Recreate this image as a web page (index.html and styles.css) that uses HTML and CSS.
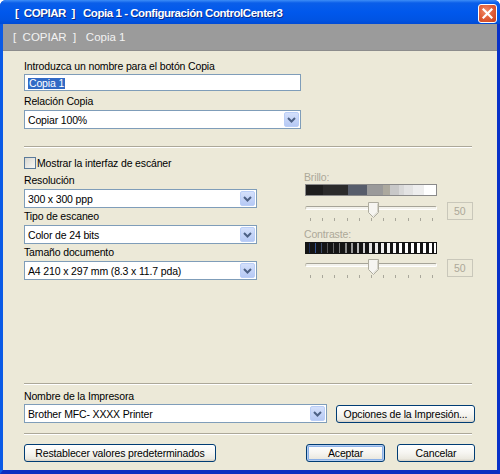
FILE: index.html
```html
<!DOCTYPE html>
<html lang="es">
<head>
<meta charset="utf-8">
<title>Copia 1 - Configuración ControlCenter3</title>
<link rel="stylesheet" href="styles.css">
</head>
<body>
<div class="window">
  <div class="titlebar">
    <span class="title">[  COPIAR  ]   Copia 1 - Configuración ControlCenter3</span>
    <span class="close"><svg width="11" height="11" viewBox="0 0 11 11"><path d="M1.5 1.5 L9.5 9.5 M9.5 1.5 L1.5 9.5" stroke="#fff" stroke-width="2.2" stroke-linecap="square"/></svg></span>
  </div>
  <div class="frame">
    <div class="header">[  COPIAR  ]   Copia 1</div>
    <div class="body">
      <div class="lbl">Introduzca un nombre para el botón Copia</div>
      <div class="textbox w-name"><span class="selected">Copia 1</span></div>
      <div class="lbl gap4">Relación Copia</div>
      <div class="select w-name"><span class="val">Copiar 100%</span><span class="arrow"><svg width="9" height="6" viewBox="0 0 9 6"><path d="M1 1 L4.5 4.5 L8 1" fill="none" stroke="#4d6185" stroke-width="2"/></svg></span></div>

      <div class="sep sep-top"></div>

      <div class="check-row"><span class="checkbox"></span><span>Mostrar la interfaz de escáner</span></div>

      <div class="cols">
        <div class="col-left">
          <div class="lbl">Resolución</div>
          <div class="select w-col"><span class="val">300 x 300 ppp</span><span class="arrow"><svg width="9" height="6" viewBox="0 0 9 6"><path d="M1 1 L4.5 4.5 L8 1" fill="none" stroke="#4d6185" stroke-width="2"/></svg></span></div>
          <div class="lbl gap2">Tipo de escaneo</div>
          <div class="select w-col"><span class="val">Color de 24 bits</span><span class="arrow"><svg width="9" height="6" viewBox="0 0 9 6"><path d="M1 1 L4.5 4.5 L8 1" fill="none" stroke="#4d6185" stroke-width="2"/></svg></span></div>
          <div class="lbl gap2">Tamaño documento</div>
          <div class="select w-col"><span class="val">A4 210 x 297 mm (8.3 x 11.7 pda)</span><span class="arrow"><svg width="9" height="6" viewBox="0 0 9 6"><path d="M1 1 L4.5 4.5 L8 1" fill="none" stroke="#4d6185" stroke-width="2"/></svg></span></div>
        </div>
        <div class="col-right">
          <div class="lbl disabled">Brillo:</div>
          <div class="bright-bar"></div>
          <div class="slider-row">
            <div class="slider">
              <div class="track"></div>
              <svg class="thumb" width="11" height="16" viewBox="0 0 11 16"><path d="M0.5 0.5 H10.5 V10.5 L5.5 15.5 L0.5 10.5 Z" fill="#f6f5f1" stroke="#aeac9f"/><path d="M9.5 1.5 V10 L5.5 14" fill="none" stroke="#d6d4c8"/></svg>
              <div class="ticks"><i></i><i></i><i></i><i></i><i></i><i></i><i></i><i></i><i></i><i></i><i></i></div>
            </div>
            <div class="numbox">50</div>
          </div>
          <div class="lbl disabled gap8">Contraste:</div>
          <svg class="contrast-bar" width="132" height="12" viewBox="0 0 132 12">
            <rect x="0" y="0" width="132" height="12" fill="#141414"/>
            <rect x="4" y="1" width="1" height="10" fill="#1c2c55"/>
            <rect x="10" y="1" width="1" height="10" fill="#35538e"/>
            <rect x="16" y="1" width="1" height="10" fill="#3d4a66"/>
            <rect x="22" y="1" width="1" height="10" fill="#555"/>
            <rect x="28" y="1" width="1" height="10" fill="#666"/>
            <rect x="34" y="1" width="1" height="10" fill="#777"/>
            <rect x="40" y="1" width="2" height="10" fill="#888"/>
            <rect x="46" y="1" width="2" height="10" fill="#9a9a9a"/>
            <rect x="52" y="1" width="2" height="10" fill="#b8b8b8"/>
            <rect x="58" y="1" width="2" height="10" fill="#cfcfcf"/>
            <rect x="64" y="1" width="3" height="10" fill="#e2e2e2"/>
            <rect x="70" y="1" width="3" height="10" fill="#eaeaea"/>
            <rect x="76" y="1" width="3" height="10" fill="#f0f0f0"/>
            <rect x="82" y="1" width="3" height="10" fill="#f4f4f4"/>
            <rect x="88" y="1" width="3" height="10" fill="#f8f8f8"/>
            <rect x="94" y="1" width="3" height="10" fill="#fff"/>
            <rect x="100" y="1" width="3" height="10" fill="#fff"/>
            <rect x="106" y="1" width="3" height="10" fill="#fff"/>
            <rect x="112" y="1" width="3" height="10" fill="#fff"/>
            <rect x="118" y="1" width="3" height="10" fill="#fff"/>
            <rect x="124" y="1" width="3" height="10" fill="#fff"/>
            <rect x="129" y="1" width="2" height="10" fill="#fff"/>
          </svg>
          <div class="slider-row gap5">
            <div class="slider">
              <div class="track"></div>
              <svg class="thumb" width="11" height="16" viewBox="0 0 11 16"><path d="M0.5 0.5 H10.5 V10.5 L5.5 15.5 L0.5 10.5 Z" fill="#f6f5f1" stroke="#aeac9f"/><path d="M9.5 1.5 V10 L5.5 14" fill="none" stroke="#d6d4c8"/></svg>
              <div class="ticks"><i></i><i></i><i></i><i></i><i></i><i></i><i></i><i></i><i></i><i></i><i></i></div>
            </div>
            <div class="numbox">50</div>
          </div>
        </div>
      </div>

      <div class="spacer"></div>

      <div class="sep"></div>
      <div class="lbl gap5">Nombre de la Impresora</div>
      <div class="printer-row">
        <div class="select w-printer"><span class="val">Brother MFC- XXXX Printer</span><span class="arrow"><svg width="9" height="6" viewBox="0 0 9 6"><path d="M1 1 L4.5 4.5 L8 1" fill="none" stroke="#4d6185" stroke-width="2"/></svg></span></div>
        <button class="btn w-opts">Opciones de la Impresión...</button>
      </div>
      <div class="sep sep-mid"></div>
      <div class="buttons">
        <button class="btn w-reset">Restablecer valores predeterminados</button>
        <div class="btn-group">
          <button class="btn btn-default w-ok">Aceptar</button>
          <button class="btn w-cancel">Cancelar</button>
        </div>
      </div>
    </div>
  </div>
</div>
</body>
</html>
```

FILE: styles.css
```css
html, body {
  margin: 0;
  padding: 0;
}
body {
  font-family: "Liberation Sans", Arial, sans-serif;
  font-size: 10.5px;
  letter-spacing: -0.15px;
  color: #000;
  background: #fff;
}
.window {
  width: 500px;
  height: 474px;
  display: flex;
  flex-direction: column;
  background: #0046d5;
  border-radius: 6px 6px 0 0;
  overflow: hidden;
}
.titlebar {
  height: 24px;
  flex: none;
  display: flex;
  align-items: center;
  padding-left: 15px;
  box-sizing: border-box;
  background: linear-gradient(#3d8df7 0px, #0a5ee9 3px, #0058ec 12px, #0054e3 20px, #004bd6 24px);
}
.title {
  flex: 1;
  white-space: pre;
  color: #fff;
  font-weight: bold;
  font-size: 11.5px;
  letter-spacing: -0.45px;
  padding-top: 2px;
  text-shadow: 1px 1px 0 #0a2a8a;
}
.close {
  width: 19px;
  height: 19px;
  margin-right: 3px;
  margin-top: 2px;
  box-sizing: border-box;
  border: 1px solid #fff;
  border-radius: 3px;
  background: radial-gradient(circle at 40% 35%, #f08e6c 0%, #e2603a 45%, #c8401c 100%);
  display: flex;
  align-items: center;
  justify-content: center;
}
.frame {
  flex: 1;
  display: flex;
  flex-direction: column;
  border-left: 3px solid #0a5ae6;
  border-right: 3px solid #0831c8;
  border-bottom: 4px solid #0a2fc0;
}
.header {
  height: 27px;
  flex: none;
  box-sizing: border-box;
  background: #9b9b9b;
  border-bottom: 1px solid #8c8c8c;
  color: #f2f2f2;
  font-size: 11.5px;
  letter-spacing: 0;
  white-space: pre;
  padding-left: 10px;
  line-height: 27px;
}
.body {
  flex: 1;
  background: #ece9d8;
  padding: 9px 22px 8px 21px;
  display: flex;
  flex-direction: column;
  min-height: 0;
}
.lbl {
  height: 13px;
  line-height: 13px;
  white-space: nowrap;
}
.gap2 { margin-top: 2px; }
.gap4 { margin-top: 4px; }
.gap5 { margin-top: 5px; }
.gap8 { margin-top: 8px; }
.disabled { color: #aca899; }

.textbox {
  margin-top: 1px;
  height: 17px;
  box-sizing: border-box;
  border: 1px solid #7f9db9;
  background: #fff;
  padding: 2px 0 0 3px;
}
.selected {
  display: inline-block;
  background: #316ac5;
  color: #fff;
  line-height: 11px;
  height: 11px;
  padding: 0 1px;
}
.w-name { width: 277px; }
.w-col { width: 233px; }
.w-printer { width: 303px; }

.select {
  margin-top: 2px;
  height: 19px;
  box-sizing: border-box;
  border: 1px solid #7f9db9;
  background: #fff;
  display: flex;
  align-items: center;
  padding: 1px;
}
.select .val {
  flex: 1;
  padding-left: 2px;
  white-space: nowrap;
  overflow: hidden;
}
.arrow {
  width: 15px;
  height: 15px;
  box-sizing: border-box;
  border-radius: 2px;
  border: 1px solid #bacef7;
  background: linear-gradient(#d4e0fb, #b6c9f4);
  display: flex;
  align-items: center;
  justify-content: center;
}

.sep {
  border-top: 1px solid #aca899;
  border-bottom: 1px solid #fff;
  height: 0;
  margin-right: 3px;
  flex: none;
}
.sep-top { margin-top: 17px; }
.sep-mid { margin-top: 10px; }

.check-row {
  margin-top: 8px;
  height: 13px;
  display: flex;
  align-items: center;
  gap: 1px;
}
.checkbox {
  width: 12px;
  height: 12px;
  box-sizing: border-box;
  border: 1px solid #5a7a9a;
  background: linear-gradient(135deg, #d8d7d0, #f8f8f5);
}

.cols {
  margin-top: 2px;
  display: flex;
  gap: 47px;
}
.col-left {
  padding-top: 3px;
}
.col-right {
  display: flex;
  flex-direction: column;
  width: 171px;
}
.bright-bar {
  margin-left: 1px;
  width: 132px;
  height: 12px;
  box-sizing: border-box;
  border: 1px solid #8a8a8a;
  background: linear-gradient(to right,
    #1e1e1e 0px, #1e1e1e 17px,
    #2b2b2b 17px, #2b2b2b 42px,
    #575d6b 42px, #575d6b 61px,
    #9a9a9a 61px, #9a9a9a 77px,
    #aca99e 77px, #aca99e 84px,
    #c8c8c8 84px, #c8c8c8 93px,
    #d8d8d8 93px, #d8d8d8 98px,
    #e3e3e3 98px, #e3e3e3 107px,
    #eeeeee 107px, #eeeeee 118px,
    #ffffff 118px);
}
.slider-row {
  margin-top: 6px;
  display: flex;
  align-items: flex-start;
  height: 18px;
}
.slider-row.gap5 { margin-top: 5px; }
.slider {
  position: relative;
  margin-left: 1px;
  width: 132px;
  height: 19px;
}
.track {
  margin-top: 4px;
  height: 4px;
  box-sizing: border-box;
  border-top: 1px solid #a6a498;
  border-left: 1px solid #c6c3b4;
  border-bottom: 1px solid #fff;
  border-right: 1px solid #fff;
  background: #f3f2ec;
  border-radius: 2px;
}
.thumb {
  position: absolute;
  left: 63px;
  top: 0;
}
.ticks {
  margin-top: 8px;
  padding: 0 4px 0 5px;
  display: flex;
  justify-content: space-between;
}
.ticks i {
  display: block;
  width: 1px;
  height: 3px;
  background: #a9a79b;
}
.numbox {
  margin-left: 10px;
  width: 26px;
  height: 18px;
  box-sizing: border-box;
  border: 1px solid #c9c7ba;
  color: #aca899;
  line-height: 16px;
  padding-left: 6px;
}
.contrast-bar {
  display: block;
  margin-left: 1px;
  margin-top: 1px;
}

.spacer { flex: 1; }

.printer-row {
  margin-top: 1px;
  display: flex;
  align-items: center;
  gap: 9px;
}
.printer-row .select { margin-top: 0; }

.btn {
  font-family: inherit;
  font-size: inherit;
  letter-spacing: inherit;
  color: #000;
  height: 18px;
  box-sizing: border-box;
  border: 1px solid #003c74;
  border-radius: 3px;
  background: linear-gradient(#ffffff 0%, #f6f5f1 50%, #ebe9e0 85%, #d6d0c5 100%);
  padding: 0;
  margin: 0;
  line-height: 16px;
  text-align: center;
  white-space: nowrap;
}
.btn-default {
  box-shadow: inset 0 0 0 1px #b3ccf1, inset 0 0 0 2px #8bb0e6;
}
.w-opts { width: 139px; }
.w-reset { width: 192px; }
.w-ok { width: 79px; }
.w-cancel { width: 78px; }

.buttons {
  margin-top: 8px;
  display: flex;
  justify-content: space-between;
  align-items: center;
  height: 19px;
}
.btn-group {
  display: flex;
  gap: 12px;
}
```
